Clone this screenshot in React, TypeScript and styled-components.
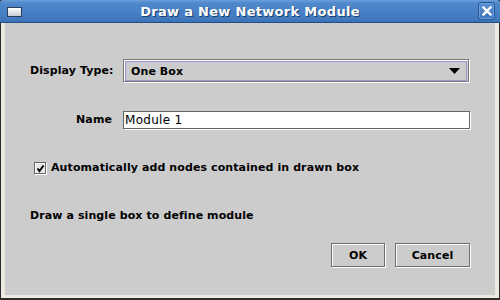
import styled, { createGlobalStyle } from "styled-components";

const GlobalStyle = createGlobalStyle`
    html, body {
        margin: 0;
        padding: 0;
        background: #cccccc;
    }
    body {
        font-family: "DejaVu Sans", "Liberation Sans", sans-serif;
    }
`;

function CheckMark() {
    return (
        <svg width="9" height="9" viewBox="0 0 9 9">
            <path d="M1.5 4.5 L3.5 7 L7.5 1.5" stroke="#000" strokeWidth="2" fill="none" />
        </svg>
    );
}

function CloseIcon() {
    return (
        <svg width="10" height="10" viewBox="0 0 10 10">
            <path d="M1.5 1.5 L8.5 8.5 M8.5 1.5 L1.5 8.5" stroke="#fff" strokeWidth="2.4" strokeLinecap="square" />
        </svg>
    );
}

function ArrowDown() {
    return (
        <svg width="11" height="6" viewBox="0 0 11 6">
            <path d="M0 0 L11 0 L5.5 6 Z" fill="#000" />
        </svg>
    );
}

function App() {
    return (
        <>
            <GlobalStyle />
            <Window>
                <TitleBar>
                    <WindowIcon />
                    <Title>Draw a New Network Module</Title>
                    <CloseButton>
                        <CloseIcon />
                    </CloseButton>
                </TitleBar>

                <Frame>
                    <Body>
                        {/* form rows */}
                        <FormGrid>
                            <Label>Display Type:</Label>
                            <Combo>
                                <ComboInner>
                                    <span>One Box</span>
                                    <ArrowDown />
                                </ComboInner>
                            </Combo>

                            <Label $indent>Name</Label>
                            <TextField>Module 1</TextField>
                        </FormGrid>

                        <CheckRow>
                            <CheckBox>
                                <CheckMark />
                            </CheckBox>
                            <Label>Automatically add nodes contained in drawn box</Label>
                        </CheckRow>

                        <Message>Draw a single box to define module</Message>

                        <ButtonRow>
                            <Button $width={54}>OK</Button>
                            <Button $width={75}>Cancel</Button>
                        </ButtonRow>
                    </Body>
                </Frame>
            </Window>
        </>
    );
}

const Window = styled.div`
    width: 500px;
    height: 300px;
    display: flex;
    flex-direction: column;
    background: #2e2e2e;
    overflow: hidden;
`;

const TitleBar = styled.div`
    height: 23px;
    flex-shrink: 0;
    display: flex;
    align-items: center;
    padding: 0 5px 0 7px;
    background: linear-gradient(#6a9fdc 0px, #5089cc 3px, #3f78bd 20px, #3a70b3 22px);
    border-bottom: 1px solid #254f86;
    border-radius: 3px 3px 0 0;
    box-sizing: border-box;
`;

const WindowIcon = styled.div`
    width: 13px;
    height: 8px;
    border: 1px solid #2c3e5c;
    background: linear-gradient(#ffffff, #c8ccd4);
    margin-top: 1px;
`;

const Title = styled.div`
    flex: 1;
    text-align: center;
    color: #fff;
    font-weight: bold;
    font-size: 13px;
    letter-spacing: 0.3px;
    text-shadow: 1px 1px 0 #1d3d66;
`;

const CloseButton = styled.div`
    width: 15px;
    height: 16px;
    display: flex;
    align-items: center;
    justify-content: center;
    border: 1px solid #2a5690;
    border-radius: 3px;
    background: linear-gradient(#5a92d6, #3d76bc);
    box-shadow: inset 0 0 0 1px #6a9fe0;
`;

const Frame = styled.div`
    flex: 1;
    display: flex;
    padding: 0 1px 2px 1px;
    background: #ece9e1;
    border-left: 1px solid #2e2e2e;
    border-right: 1px solid #2e2e2e;
    border-bottom: 2px solid #2e2e2e;
`;

const Body = styled.div`
    flex: 1;
    margin: 0 3px 1px 3px;
    background: #cccccc;
    display: flex;
    flex-direction: column;
    padding: 36px 25px 0 25px;
`;

const FormGrid = styled.div`
    display: grid;
    grid-template-columns: 85px 1fr;
    column-gap: 8px;
    row-gap: 29px;
    align-items: center;
`;

const Label = styled.div<{ $indent?: boolean }>`
    font-size: 11px;
    line-height: 16px;
    letter-spacing: 0.1px;
    font-weight: bold;
    color: #000;
    white-space: nowrap;
    text-align: ${(p) => (p.$indent ? "right" : "left")};
    padding-right: ${(p) => (p.$indent ? "3px" : "0")};
`;

const Combo = styled.div`
    height: 23px;
    border: 1px solid #7a7a7a;
    box-shadow: inset 1px 1px 0 #fff, 1px 1px 0 #fff;
    padding: 1px 1px 0 1px;
    box-sizing: border-box;
    width: 346px;
`;

const ComboInner = styled.div`
    height: 20px;
    box-sizing: border-box;
    border: 1px solid #9a9ac8;
    box-shadow: inset 1px 1px 0 #c8c8e4;
    display: flex;
    align-items: center;
    justify-content: space-between;
    padding: 0 6px 0 5px;
    font-size: 11px;
    letter-spacing: 0.1px;
    font-weight: bold;
`;

const TextField = styled.div`
    height: 18px;
    width: 347px;
    box-sizing: border-box;
    background: #fff;
    border: 1px solid #666;
    box-shadow: 1px 1px 0 #fff;
    font-size: 12px;
    letter-spacing: 0.3px;
    display: flex;
    align-items: center;
    padding-left: 1px;
`;

const CheckRow = styled.div`
    display: flex;
    align-items: center;
    gap: 5px;
    margin-top: 31px;
    padding-left: 4px;
`;

const CheckBox = styled.div`
    width: 12px;
    height: 12px;
    box-sizing: border-box;
    border: 1px solid #666;
    box-shadow: inset 1px 1px 0 #fff, 1px 1px 0 #fff;
    background: #e8e8e8;
    display: flex;
    align-items: center;
    justify-content: center;
`;

const Message = styled.div`
    margin-top: 32px;
    font-size: 11px;
    line-height: 16px;
    letter-spacing: 0.1px;
    font-weight: bold;
`;

const ButtonRow = styled.div`
    display: flex;
    justify-content: flex-end;
    gap: 10px;
    margin-top: 19px;
`;

const Button = styled.div<{ $width: number }>`
    width: ${(p) => p.$width}px;
    height: 24px;
    box-sizing: border-box;
    border: 1px solid #6e6e6e;
    box-shadow: inset 1px 1px 0 #fff, 1px 1px 0 #fff;
    display: flex;
    align-items: center;
    justify-content: center;
    font-size: 11px;
    letter-spacing: 0.1px;
    font-weight: bold;
`;

export default App;
